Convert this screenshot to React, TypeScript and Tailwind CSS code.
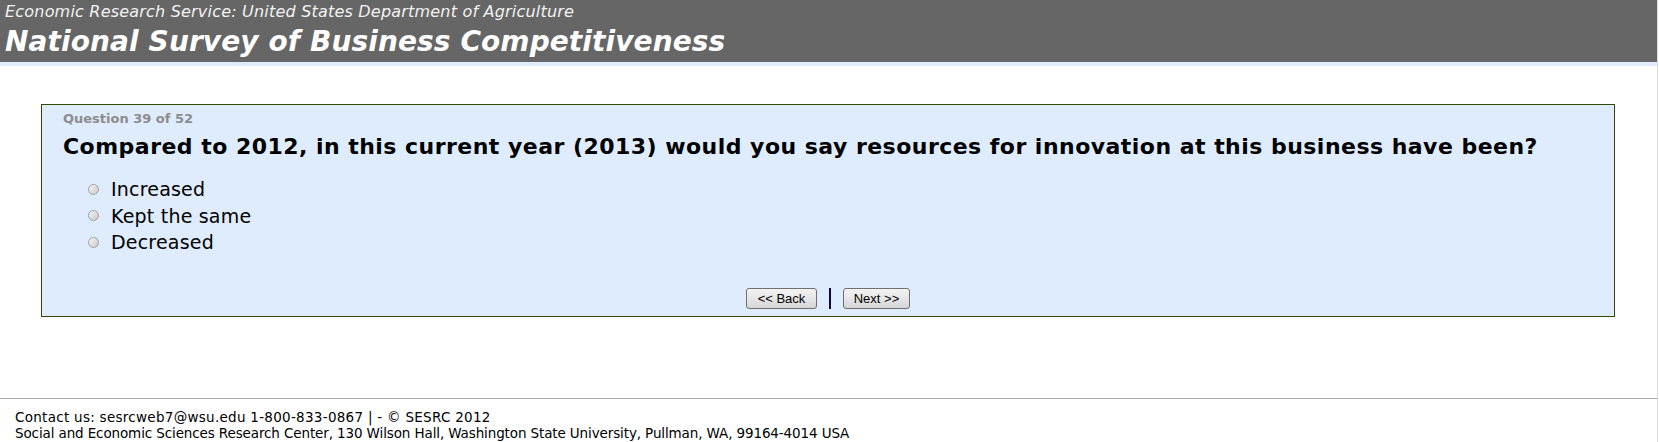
import React from "react";

const tahoma = { fontFamily: '"DejaVu Sans", Verdana, sans-serif' };

function Radio() {
  return (
    <span className="inline-block w-[11px] h-[11px] rounded-full border border-[#a0a0a0] bg-gradient-to-br from-[#f6f6f6] to-[#c8c8c8]" />
  );
}

function Btn({ children, w }: { children: React.ReactNode; w: string }) {
  return (
    <button
      className={`${w} h-[21px] rounded-[3px] border border-[#707070] bg-gradient-to-b from-[#f3f3f3] via-[#e6e6e6] to-[#d4d4d4] text-[13px] leading-none text-black`}
      style={{ fontFamily: '"Liberation Sans", Arial, sans-serif' }}
    >
      {children}
    </button>
  );
}

export default function App() {
  return (
    <div className="w-[1659px] h-[442px] bg-white flex overflow-hidden" style={tahoma}>
      <div className="w-[1657px] flex flex-col">
        <div className="h-[62px] bg-[#666666] pl-[5px] flex flex-col">
          <div className="text-[16px] italic text-[#f2f2f2] leading-[22px] pt-[1px] tracking-[0.2px]">
            Economic Research Service: United States Department of Agriculture
          </div>
          <div className="text-[28px] italic font-bold text-white leading-[34px] pt-[2px] tracking-[0.1px]">
            National Survey of Business Competitiveness
          </div>
        </div>
        <div className="h-[4px] bg-[#deecfd]" />
        <div className="pt-[38px] pl-[41px]">
          <div className="w-[1574px] h-[213px] border border-[#2e4a05] bg-[#deecfd] flex flex-col pl-[21px]">
            <div className="text-[13px] font-bold text-[#8c8c8c] leading-[16px] pt-[6px]">
              Question 39 of 52
            </div>
            <div className="text-[22px] font-bold text-black leading-[28px] pt-[6px] tracking-[0.47px] whitespace-nowrap">
              Compared to 2012, in this current year (2013) would you say resources for innovation at this business have been?
            </div>
            <div className="flex flex-col pl-[25px] pt-[15px]">
              {["Increased", "Kept the same", "Decreased"].map((t) => (
                <div key={t} className="flex items-center h-[26.5px]">
                  <Radio />
                  <span className="ml-[12px] text-[19px] leading-[22px] tracking-[0.2px] text-black">{t}</span>
                </div>
              ))}
            </div>
            <div className="flex items-center justify-center gap-[12px] pr-[21px] mt-[32px]">
              <Btn w="w-[71px]">&lt;&lt; Back</Btn>
              <div className="w-[2px] h-[21px] bg-[#0a0a2e]" />
              <Btn w="w-[67px]">Next &gt;&gt;</Btn>
            </div>
          </div>
        </div>
        <div className="mt-[81px] border-t border-[#aaaaaa] pt-[10px] pl-[15px] text-[13.5px] leading-[16px] text-black">
          <div className="tracking-[0.28px]">Contact us: sesrcweb7@wsu.edu 1-800-833-0867 | - © SESRC 2012</div>
          <div className="tracking-[-0.12px]">Social and Economic Sciences Research Center, 130 Wilson Hall, Washington State University, Pullman, WA, 99164-4014 USA</div>
        </div>
      </div>
      <div className="w-[2px] border-l border-[#dcdcdc]" />
    </div>
  );
}
